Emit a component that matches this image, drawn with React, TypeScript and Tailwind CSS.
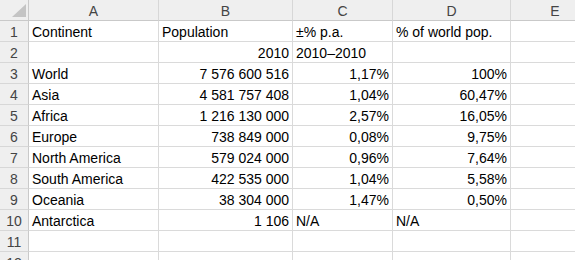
import React from "react";

type Cell = { t: string; a?: "l" | "r" };

const rows: Cell[][] = [
  [{ t: "Continent" }, { t: "Population" }, { t: "±% p.a." }, { t: "% of world pop." }, { t: "" }],
  [{ t: "" }, { t: "2010", a: "r" }, { t: "2010–2010" }, { t: "" }, { t: "" }],
  [{ t: "World" }, { t: "7 576 600 516", a: "r" }, { t: "1,17%", a: "r" }, { t: "100%", a: "r" }, { t: "" }],
  [{ t: "Asia" }, { t: "4 581 757 408", a: "r" }, { t: "1,04%", a: "r" }, { t: "60,47%", a: "r" }, { t: "" }],
  [{ t: "Africa" }, { t: "1 216 130 000", a: "r" }, { t: "2,57%", a: "r" }, { t: "16,05%", a: "r" }, { t: "" }],
  [{ t: "Europe" }, { t: "738 849 000", a: "r" }, { t: "0,08%", a: "r" }, { t: "9,75%", a: "r" }, { t: "" }],
  [{ t: "North America" }, { t: "579 024 000", a: "r" }, { t: "0,96%", a: "r" }, { t: "7,64%", a: "r" }, { t: "" }],
  [{ t: "South America" }, { t: "422 535 000", a: "r" }, { t: "1,04%", a: "r" }, { t: "5,58%", a: "r" }, { t: "" }],
  [{ t: "Oceania" }, { t: "38 304 000", a: "r" }, { t: "1,47%", a: "r" }, { t: "0,50%", a: "r" }, { t: "" }],
  [{ t: "Antarctica" }, { t: "1 106", a: "r" }, { t: "N/A" }, { t: "N/A" }, { t: "" }],
  [{ t: "" }, { t: "" }, { t: "" }, { t: "" }, { t: "" }],
  [{ t: "" }, { t: "" }, { t: "" }, { t: "" }, { t: "" }],
];

const cols = ["A", "B", "C", "D", "E"];

export default function App() {
  return (
    <div
      className="w-[575px] h-[260px] overflow-hidden bg-white text-[14px] text-black"
      style={{ fontFamily: '"Liberation Sans", Arial, sans-serif' }}
    >
      <div className="grid grid-cols-[29px_130px_134px_100px_118px_89px] auto-rows-[21px] w-[600px]">
        <div className="relative bg-[#efefef] border-r border-b border-[#c9c9c9] box-border flex items-end justify-end pr-[2px] pb-[3px]">
          <svg width="14" height="13" viewBox="0 0 14 13" className="block">
            <polygon points="14,0 14,13 0,13" fill="#c4c4c4" />
          </svg>
        </div>
        {cols.map((c) => (
          <div
            key={c}
            className="bg-[#efefef] border-r border-r-[#d7d7d7] border-b border-b-[#c9c9c9] box-border text-center leading-[20px] pt-[1px] text-[#444444] overflow-hidden"
          >
            {c}
          </div>
        ))}
        {rows.map((r, i) => (
          <React.Fragment key={i}>
            <div className="bg-[#efefef] border-r border-r-[#c9c9c9] border-b border-b-[#d7d7d7] box-border text-center leading-[20px] pt-[1px] text-[#444444] overflow-hidden">
              {i + 1}
            </div>
            {r.map((cell, j) => (
              <div
                key={j}
                className={
                  "border-r border-b border-[#dadada] box-border leading-[20px] pt-[1px] whitespace-nowrap overflow-hidden px-[3px] " +
                  (cell.a === "r" ? "text-right" : "text-left")
                }
              >
                {cell.t}
              </div>
            ))}
          </React.Fragment>
        ))}
      </div>
    </div>
  );
}
